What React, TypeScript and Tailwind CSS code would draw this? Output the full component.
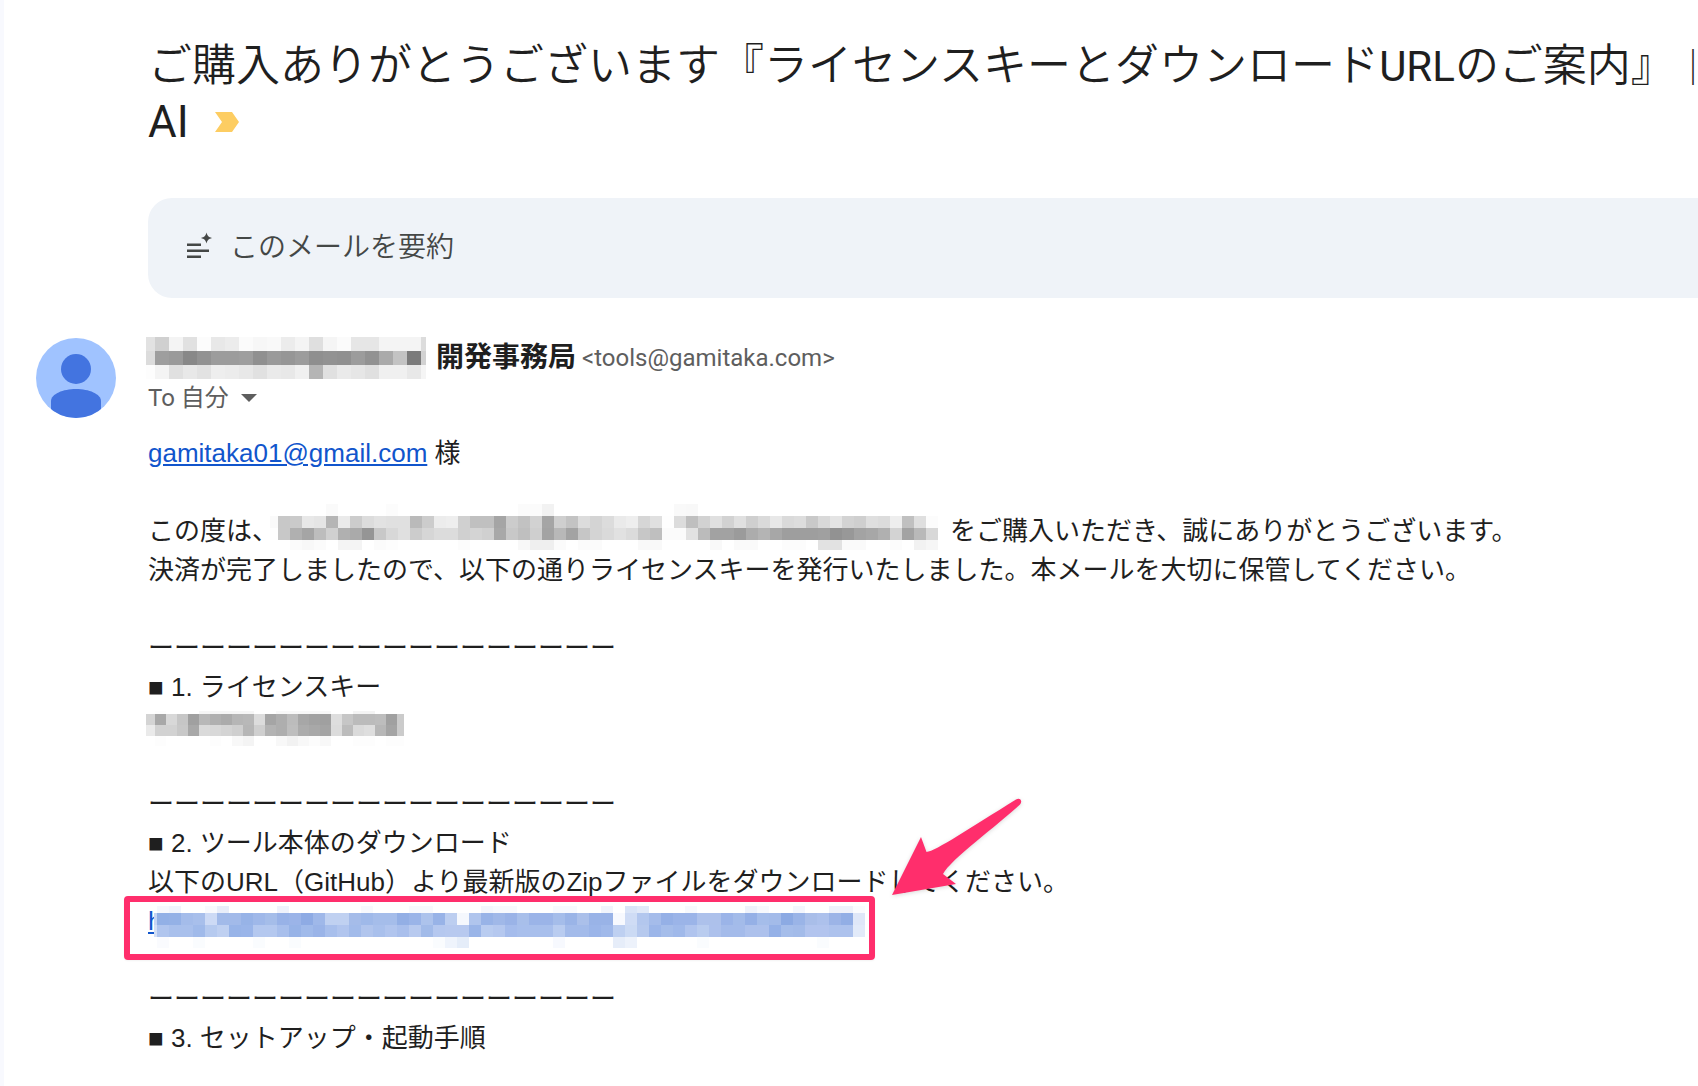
import { ReactNode } from "react";

type MosaicProps = {
  label: string;
  first: number;
  tile: number;
  width: number;
  rows: { height: number; cells: string }[];
  className?: string;
};

// "-" leaves a cell empty, two digits are a grey, six digits a full colour
const toColor = (cell: string) => (cell.length === 2 ? `#${cell}${cell}${cell}` : `#${cell}`);

const Mosaic = ({ label, first, tile, width, rows, className }: MosaicProps) => {
  const height = rows.reduce((sum, row) => sum + row.height, 0);
  let top = 0;
  return (
    <svg
      role="img"
      aria-label={label}
      width={width}
      height={height}
      shapeRendering="crispEdges"
      className={`shrink-0 bg-white ${className ?? ""}`}
    >
      {rows.map((row, r) => {
        const y = top;
        top += row.height;
        return row.cells.split(" ").map((cell, c) =>
          cell === "-" ? null : (
            <rect
              key={`${r}-${c}`}
              x={c === 0 ? 0 : first + (c - 1) * tile}
              y={y}
              width={c === 0 ? first : tile}
              height={row.height}
              fill={toColor(cell)}
            />
          )
        );
      })}
    </svg>
  );
};

const senderRows = [
  { height: 14, cells: "e2 d0 f4 e1 fc e8 ec fb f7 f9 ec f4 df f5 fb e6 e6 f4 f4 f4 dc f4" },
  { height: 14, cells: "dc 9e 9a 88 92 9c 9c 9e 90 9a 96 9c 8f 92 90 9c 92 aa c3 7b d2" },
  { height: 14, cells: "fd f4 e0 e8 e2 ee ec e8 e1 ea e8 f0 b5 e0 ea e6 e0 f0 f0 e8 f5" },
];

const productRows = [
  {
    height: 12,
    cells:
      "- - - - - fa - - - - fc - - - - - - - - - - fb fb f2 - - - - - - - - - - f9 f8",
  },
  {
    height: 12,
    cells:
      "fa c8 ca e8 e5 b5 ea cc dc e2 e0 e0 ba cc ec ee d0 c0 c0 a5 cc c2 d2 a5 cf c3 dc d4 dc ea ee d6 e0 fe dc bf d2 e0 d2 e0 cf da e8 da dd c9 d9 e4 d3 cf df dc ee c0 df fc",
  },
  {
    height: 12,
    cells:
      "fe c8 b0 a5 bd d0 b0 aa 95 c8 d8 e0 cc d6 dc dc d0 d4 d0 a8 c8 bf cf a3 b8 a3 c6 d4 da e1 db c7 bf fb fb e2 bb a2 a2 9b ac b4 a7 9e 9e 9e a0 92 98 a3 a7 b0 d3 a3 b9 d8",
  },
  {
    height: 10,
    cells:
      "- - fb f8 fb - f4 f4 - fb fd - - - - - fc - - - - f8 ef ef fb - fb fb - - - f9 f9 - - - - f9 - fa fa - - fc fc - e2 e2 fa fa - - fc - f2 f6",
  },
];

const licenseRows = [
  { height: 3, cells: "- fd - - - f6 f6 f6 f6 f6 - - f8 f8 f8 f8 f8 - - f4 f4" },
  { height: 11, cells: "d4 a8 d8 c6 a0 b8 b0 ab b6 b8 dc a5 ae bc a7 a2 a0 de c6 bb bb bd a0 cb" },
  { height: 11, cells: "ea d2 d2 c8 a8 da d8 d4 cf b6 cf b3 ae be ac a8 a4 dc bc da de b7 a4 cb" },
  { height: 10, cells: "- fd - - - - fd - f8 f4 - - f8 f2 f8 fc f8 - - fd fd - fd fd" },
];

const urlRows = [
  {
    height: 7,
    cells:
      "- f6f8fd f0f4fc - - f8f9fd e8edf9 - - - - eff2fb - - - - - - f7f9fd - - - f7f9fd f7f9fd - - - - f3f6fc f7f9fd f7f9fd - - - f7f9fe f7f9fe - - f0f4fc - d9e4f7 e1e9f8 - - - f7f9fd - - - - eef2fb f7f9fd - - f3f6fd - - eef1fa eef1fa fafbfe",
  },
  {
    height: 12,
    cells:
      "c6d5f3 92b0e6 94b1e6 a4bcea a8bfeb cddaf5 a2bae9 a2bae9 97b3e7 9fb8e9 a5bde9 98b2e7 9bb4e8 8eabe4 9fb8e9 c0d1f1 c0d1f1 a5bce9 9fb9e9 a5bdea a5bdea 93afe5 9ab4e8 adc3ec 98b3e7 bccef0 f5f8fd b0c5ed 98b3e7 a0b8e8 9ab3e7 a8bfea 9bb4e8 9bb4e8 a5bdea 9ab4e7 abc0ea 99b3e7 99b3e7 f7f9fe cfdcf5 b3c7ee a5bcea 95b0e6 9bb4e8 9bb4e8 adc1eb adc1eb 9bb4e8 a3bbe9 95b0e6 a5bdea a3bbe9 8caae3 9ab4e7 a9bee9 adc1ec 9cb4e7 92aee5 dfe7f8",
  },
  {
    height: 12,
    cells:
      "d3dff6 b0c5ee a9c0ec a9c0ec a0baea b6caef bfd0f1 98b4e8 9ab5e9 b4c8ef b4c8ef a8bfec 97b3e7 a0baea 9ab4e8 a8bfec b1c5ee a2bbea b1c5ed a9c0ec b1c5ee a9bfec b8caef a2bbe9 b5c8ef b7c9ef b7c9ef 9ab5e8 b9ccf0 b5c8ef a5bcec a8bfec a8bfec a8bfec b9ccf0 a3bbea a3bbea 9bb5e9 a0b9ea bed0f1 cbdaf4 b6c9ee 9cb6e9 a5bdea a0b9ea b0c4ee b9ccef adc1ec a4bbea a4bbea adc1ec adc1ec 95b1e7 a5bdea a3bbe9 b2c4ee b2c4ee adc2ed adc2ed e2eaf9",
  },
  {
    height: 11,
    cells:
      "- fafbfe - - fafcfe - - - - fafcfe - - fafcfe - - - - - - - - - - - fafcfe eff4fc e5edf9 - - - - - - - f7f9fe - - - - e6edf9 edf2fb - - - - - fafcfe - - - - - - - - - fafcfe",
  },
];

const Line = ({ children }: { children?: ReactNode }) => (
  <p className="h-[39px] whitespace-pre">{children}</p>
);

const Divider = () => <Line>{"ー".repeat(18)}</Line>;

const ImportantMarker = () => (
  <button type="button" aria-label="重要マーク" className="ml-[26px]">
    <svg width="24" height="20" viewBox="0 0 24 20">
      <path d="M0 0H17L24 10L17 20H0L7 10Z" fill="#fdcd62" />
    </svg>
  </button>
);

const SummarizeIcon = () => (
  <svg width="32" height="32" viewBox="0 0 32 32" fill="#444746" aria-hidden="true">
    <path d="M3 11.500h14v2.500H3zM3 17.500h22v2.500H3zM3 23.500h14v2.500H3z" />
    <path d="M22.500 0.500C23.500 4 24.500 5 28 6C24.500 7 23.500 8 22.500 11.500C21.500 8 20.500 7 17 6C20.500 5 21.500 4 22.500 0.500Z" />
  </svg>
);

const Avatar = () => (
  <svg width="80" height="80" viewBox="0 0 80 80" className="shrink-0" role="img" aria-label="送信者">
    <clipPath id="avatar">
      <circle cx="40" cy="40" r="40" />
    </clipPath>
    <g clipPath="url(#avatar)">
      <rect width="80" height="80" fill="#a0c3ff" />
      <circle cx="40" cy="31" r="15" fill="#4374e0" />
      <path d="M15 80V63C15 56 27 51 40 51C53 51 65 56 65 63V80Z" fill="#4374e0" />
    </g>
  </svg>
);

const Arrow = () => (
  <svg
    width="140"
    height="110"
    viewBox="0 0 140 110"
    aria-hidden="true"
    className="absolute left-[740px] top-[360px] drop-shadow-sm"
  >
    <path
      d="M4 101L33 43L38.500 58C48 57 82 34 128 5.500C132 3 135 7 132 10.500C110 31 62 66 55 80L68 90Z"
      fill="#ff2e6c"
    />
  </svg>
);

const App = () => {
  return (
    <main
      lang="ja"
      className="min-h-screen overflow-hidden border-l-4 border-[#f8f9fe] bg-white pl-8 font-['Liberation_Sans','Noto_Sans_CJK_JP',sans-serif] text-[#1f1f1f]"
    >
      <div className="pl-28">
        <h1 className="whitespace-nowrap pt-[38px] font-['Roboto','Noto_Sans_CJK_JP',sans-serif] text-[44px]/[56px] font-[350]">
          <span className="flex h-14 items-baseline">
            ご購入ありがとうございます『ライセンスキーとダウンロード
            <span className="text-[42px] font-normal">URL</span>
            のご案内』
            <span className="text-4xl">｜</span>
          </span>
          <span className="flex h-14 items-center font-normal">
            AI
            <ImportantMarker />
          </span>
        </h1>
        <button
          type="button"
          className="mt-12 flex h-[100px] w-full items-center gap-3.5 rounded-l-3xl bg-[#eff3f8] pl-9 text-[28px] font-[350] text-[#444746]"
        >
          <SummarizeIcon />
          このメールを要約
        </button>
      </div>

      <header className="mt-10 flex gap-8 font-['Roboto','Noto_Sans_CJK_JP',sans-serif]">
        <Avatar />
        <div>
          <div className="flex h-10 items-center whitespace-nowrap">
            <Mosaic
              label="送信者名"
              first={9}
              tile={14}
              width={280}
              rows={senderRows}
              className="-ml-0.5"
            />
            <h2 className="ml-2.5 text-[28px] font-bold">開発事務局</h2>
            <span className="ml-1.5 text-2xl text-[#5e5e5e]">&lt;tools@gamitaka.com&gt;</span>
          </div>
          <button type="button" className="flex h-10 items-center text-2xl text-[#5e5e5e]">
            To 自分
            <svg width="16" height="8" viewBox="0 0 16 8" className="ml-3" aria-hidden="true">
              <path d="M0 0H16L8 8Z" fill="#5e5e5e" />
            </svg>
          </button>
        </div>
      </header>

      <article className="relative ml-28 mt-4 text-[26px]/[39px]">
        <Line>
          <a href="mailto:gamitaka01@gmail.com" className="text-[#1155cc] underline">
            gamitaka01@gmail.com
          </a>{" "}
          様
        </Line>
        <Line />
        <div className="flex h-[39px] whitespace-nowrap">
          この度は、
          <Mosaic
            label="商品名"
            first={8}
            tile={12}
            width={670}
            rows={productRows}
            className="-ml-2 -mt-2 mr-2.5"
          />
          をご購入いただき、誠にありがとうございます。
        </div>
        <Line>決済が完了しましたので、以下の通りライセンスキーを発行いたしました。本メールを大切に保管してください。</Line>
        <Line />
        <Divider />
        <Line>■ 1. ライセンスキー</Line>
        <div className="flex h-[39px]">
          <Mosaic
            label="ライセンスキー"
            first={9}
            tile={11}
            width={258}
            rows={licenseRows}
            className="-ml-0.5 mt-1"
          />
        </div>
        <Line />
        <Divider />
        <Line>■ 2. ツール本体のダウンロード</Line>
        <Line>以下のURL（GitHub）より最新版のZipファイルをダウンロードしてください。</Line>
        <div className="relative flex h-[39px]">
          <a href="#download" className="flex text-[#1155cc] underline">
            h
            <Mosaic
              label="ダウンロードURL"
              first={3}
              tile={12}
              width={711}
              rows={urlRows}
              className="-ml-2 mt-1"
            />
          </a>
          <div className="absolute -left-6 -top-1.5 h-16 w-[751px] rounded-sm border-6 border-[#ff2e6c] shadow-xs" />
        </div>
        <Line />
        <Divider />
        <Line>■ 3. セットアップ・起動手順</Line>
        <Arrow />
      </article>
    </main>
  );
};

export default App;
